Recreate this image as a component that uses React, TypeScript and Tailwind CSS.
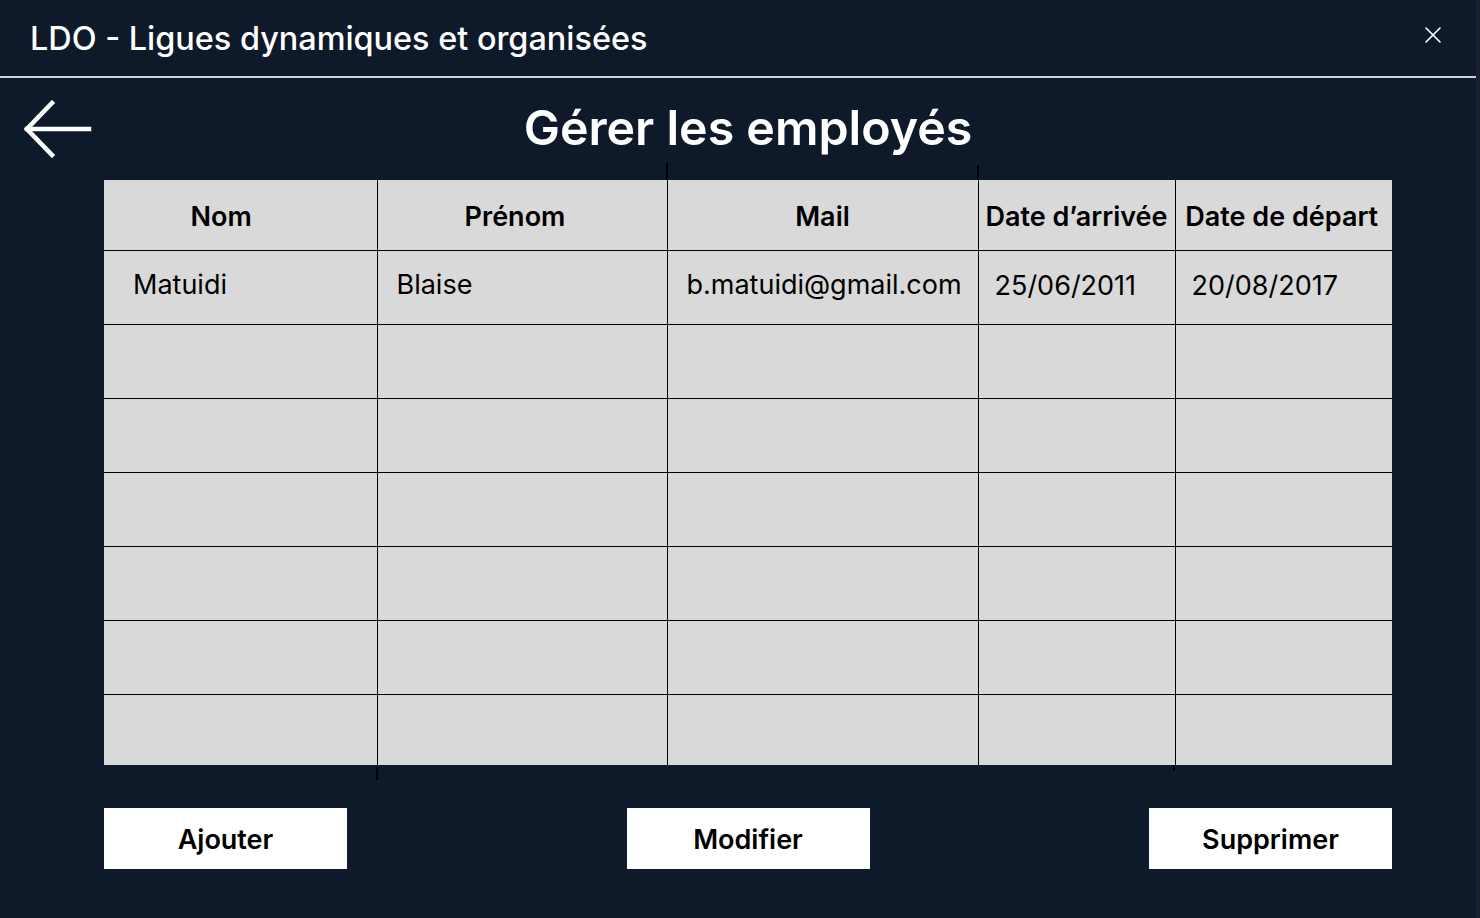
import { X } from 'lucide-react';

type Employee = {
  nom: string;
  prenom: string;
  mail: string;
  arrivee: string;
  depart: string;
};

const employees: Employee[] = [
  { nom: 'Matuidi', prenom: 'Blaise', mail: 'b.matuidi@gmail.com', arrivee: '25/06/2011', depart: '20/08/2017' },
];

const ROWS = 7;

function BackArrow() {
  return (
    <svg width="68" height="58" viewBox="0 0 68 58" fill="none" stroke="white" strokeWidth="4.5" strokeLinecap="square">
      <path d="M3 29 H65" />
      <path d="M28 3 L3 29 L28 55" />
    </svg>
  );
}

export default function App() {
  const rows = Array.from({ length: ROWS }, (_, i) => employees[i] ?? null);

  return (
    <div className="w-[1480px] h-[918px] bg-[#0e1929] flex font-['Inter',sans-serif] text-white overflow-hidden">
      <div className="flex-1 flex flex-col">
        <header className="h-[78px] flex items-center justify-between pl-[30px] pr-[29px] border-b-2 border-[#cfd2d6]">
          <h1 className="text-[32.4px] font-medium pt-[2px]">LDO - Ligues dynamiques et organisées</h1>
          <X className="w-[28px] h-[28px] mb-[6px]" strokeWidth={1.4} />
        </header>

        <div className="h-[102px] grid grid-cols-[1fr_auto_1fr] items-center">
          <div className="pl-[24px]">
            <BackArrow />
          </div>
          <h2 className="text-[48.3px] font-semibold leading-none pb-[2px] pl-[20px]">Gérer les employés</h2>
          <div />
        </div>

        <div className="relative ml-[104px] w-[1288px]">
          <div className="absolute left-[562px] -top-[17px] w-[1.5px] h-[17px] bg-black" />
          <div className="absolute left-[873px] -top-[15px] w-[1.5px] h-[15px] bg-black" />
          <div className="absolute left-[272px] -bottom-[15px] w-[1.5px] h-[15px] bg-black" />
          <div className="absolute left-[1069px] -bottom-[6px] w-[1.5px] h-[6px] bg-black" />

          <table className="w-full border-collapse bg-[#d9d9d9] text-black table-fixed">
            <colgroup>
              <col className="w-[273px]" />
              <col className="w-[290px]" />
              <col className="w-[311px]" />
              <col className="w-[197px]" />
              <col className="w-[217px]" />
            </colgroup>
            <thead>
              <tr className="h-[70px] text-[27px]">
                <th className="font-semibold text-center pt-[4px] pr-[38px]">Nom</th>
                <th className="font-semibold text-center border-l-[1.5px] border-black pt-[4px] pr-[14px]">Prénom</th>
                <th className="font-semibold text-center border-l-[1.5px] border-black pt-[4px]">Mail</th>
                <th className="font-semibold text-center border-l-[1.5px] border-black pt-[4px] whitespace-nowrap">Date d’arrivée</th>
                <th className="font-semibold text-center border-l-[1.5px] border-black pt-[4px] pr-[4px] whitespace-nowrap">Date de départ</th>
              </tr>
            </thead>
            <tbody>
              {rows.map((emp, i) => (
                <tr key={i} className={`${i === ROWS - 1 ? 'h-[71px]' : 'h-[74px]'} border-t-[1.5px] border-black text-[27px]`}>
                  <td className="pl-[29px] pb-[3px]">{emp?.nom}</td>
                  <td className="pl-[19px] pb-[3px] border-l-[1.5px] border-black">{emp?.prenom}</td>
                  <td className="pl-[19px] pb-[3px] border-l-[1.5px] border-black whitespace-nowrap">{emp?.mail}</td>
                  <td className="pl-[16px] pb-[1px] border-l-[1.5px] border-black">{emp?.arrivee}</td>
                  <td className="pl-[16px] pb-[1px] border-l-[1.5px] border-black">{emp?.depart}</td>
                </tr>
              ))}
            </tbody>
          </table>
        </div>

        <div className="ml-[104px] w-[1288px] mt-[43px] flex justify-between">
          {['Ajouter', 'Modifier', 'Supprimer'].map((label) => (
            <button
              key={label}
              className="w-[243px] h-[61px] bg-white text-black text-[27px] font-semibold flex items-center justify-center pt-[4px]"
            >
              {label}
            </button>
          ))}
        </div>
      </div>
      <div className="w-[4px] bg-[#1c2129]" />
    </div>
  );
}
